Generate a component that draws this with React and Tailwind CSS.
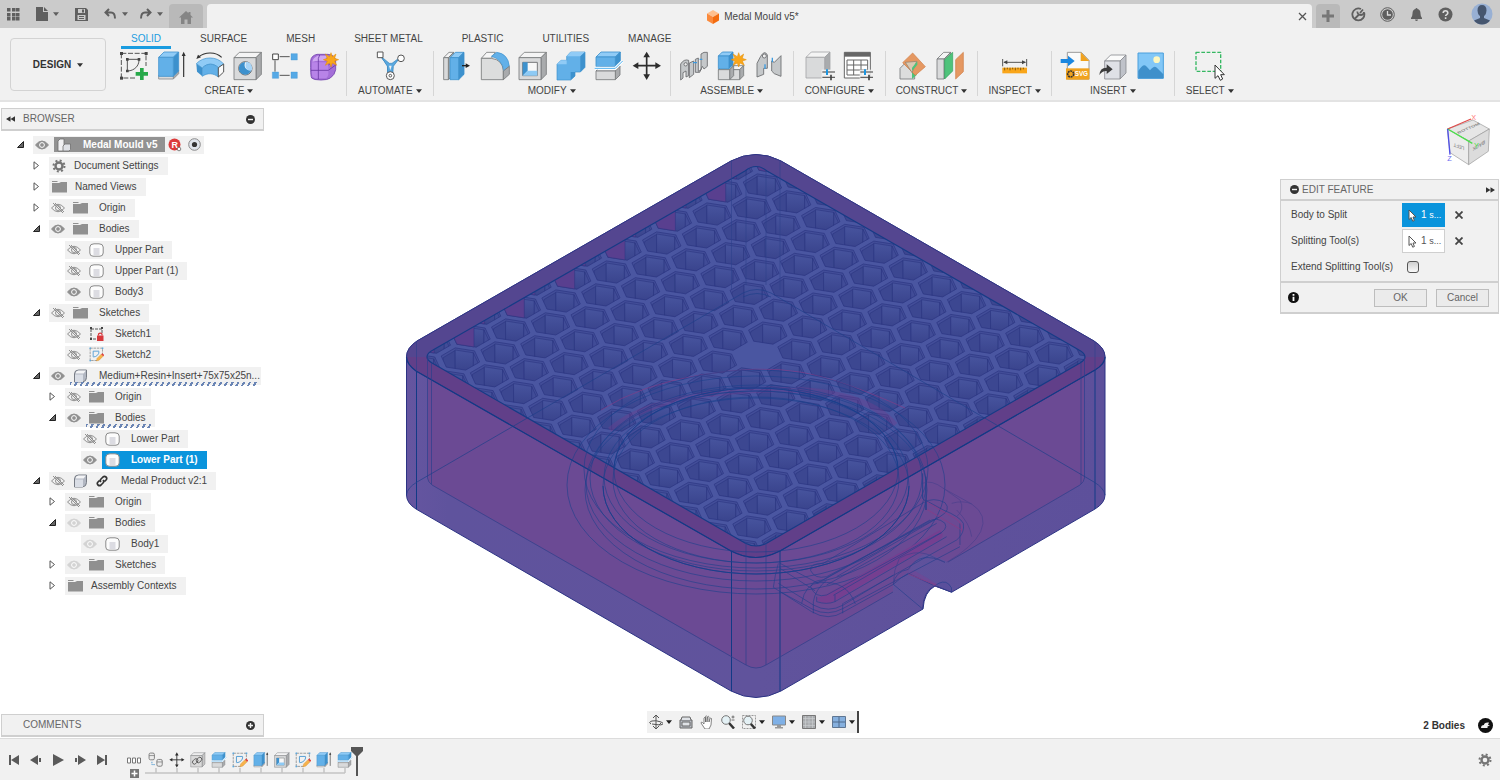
import React, { useState } from 'react';
import { clsx } from 'clsx';

const Caret = ({ className = 'text-[#333]' }) => (
  <svg viewBox="0 0 8 5" className={clsx('w-[6px] h-[4px] shrink-0', className)}>
    <path d="M0 0h8L4 5z" fill="currentColor" />
  </svg>
);

/* ---------- ribbon icons, all on a 90 x 90 grid ---------- */

const Ico = ({ size = 'size-[30px]', children }) => (
  <svg viewBox="0 0 90 90" className={clsx(size, 'shrink-0')} fill="none" strokeLinejoin="round">
    {children}
  </svg>
);

const BLUE = ['#62b0e8', '#90cbf6', '#3d91cd'];
const GREY = ['#d9dadb', '#f4f4f4', '#a9abad'];

const Box = ({ x, y, w, h, d, c = GREY, s = '#77797b' }) => (
  <g stroke={s} strokeWidth="2.5">
    <path d={`M${x} ${y + d}l${d} ${-d}h${w}l${-d} ${d}z`} fill={c[1]} />
    <path d={`M${x + w} ${y + d}l${d} ${-d}v${h}l${-d} ${d}z`} fill={c[2]} />
    <path d={`M${x} ${y + d}h${w}v${h}h${-w}z`} fill={c[0]} />
  </g>
);

const Star = ({ x, y }) => (
  <path
    transform={`translate(${x} ${y})`}
    d="M0-21l4 12 11-8-4 13 12 4-12 4 6 13-13-7-4 12-4-12-13 7 6-13-12-4 12-4-6-13 13 8z"
    fill="#f9a61a"
    stroke="#e28d00"
    strokeWidth="1.5"
  />
);

const Sketch = ({ size, pencil }) => (
  <Ico size={size}>
    <path d="M7 7h74v38M7 7v74h44" stroke="#555" strokeWidth="3" strokeDasharray="15 5" />
    {[[7, 7], [81, 7], [7, 81]].map(([x, y]) => (
      <rect key={x + '-' + y} x={x - 4} y={y - 4} width="9" height="9" fill={pencil ? '#5aa9e0' : '#444'} />
    ))}
    <path d="M25 25h35M25 25v34M60 27c0 18-14 32-34 33" stroke={pencil ? '#4595d0' : '#555'} strokeWidth={pencil ? 5 : 3} />
    {pencil ? (
      <>
        <path d="M44 84l5-17 24-24 12 12-24 24z" fill="#f7b34c" stroke="#c98220" strokeWidth="2" />
        <path d="M73 43l7-6 12 12-7 6z" fill="#e2403c" />
      </>
    ) : (
      <>
        <path d="M21 21h8v8h-8zM56 21h8v8h-8zM21 56h8v8h-8z" fill="#444" />
        <path d="M63 51h11v12h13v11H74v13H63V74H50V63h13z" fill="#27a94a" />
      </>
    )}
  </Ico>
);

const Extrude = ({ size }) => (
  <Ico size={size}>
    <Box x={5} y={58} w={44} h={10} d={16} s="#8a8c8e" />
    <Box x={5} y={3} w={44} h={57} d={16} c={BLUE} s="#4595d0" />
    <path d="M80 78V10" stroke="#333" strokeWidth="3.5" />
    <path d="M80 2l6 13H74z" fill="#333" />
  </Ico>
);

const Revolve = () => (
  <Ico>
    <path d="M12 17C30 2 62 2 80 19" stroke="#333" strokeWidth="3.5" />
    <path d="M4 24l5-13 9 8z" fill="#333" />
    <path d="M4 38C25 15 66 15 86 39L70 50C55 36 37 36 22 51z" fill={BLUE[1]} stroke="#3d91cd" strokeWidth="2" />
    <path d="M4 38l18 13v25L6 62z" fill={BLUE[2]} />
    <path d="M22 51c15-15 33-15 48-1v28c-15-12-33-13-48-2z" fill={BLUE[0]} stroke="#3d91cd" strokeWidth="2" />
    <path d="M70 50l16-11v24L70 78z" fill="#fafafa" stroke="#555" strokeWidth="3" />
  </Ico>
);

const Hole = () => (
  <Ico>
    <Box x={3} y={4} w={66} h={66} d={16} />
    <circle cx="37" cy="52" r="20" fill="#fff" stroke="#555" strokeWidth="2.5" />
    <path d="M37 33a19 19 0 1 0 18 24c-14 4-25-9-18-24z" fill={BLUE[2]} />
    <path d="M40 32c-8 16 2 30 17 26 2-16-5-25-17-26z" fill="#a8d5f7" />
  </Ico>
);

const Pattern = () => (
  <Ico>
    <path d="M26 17h30M12 28v34M26 73h30" stroke="#555" strokeWidth="3" />
    <rect x="5" y="9" width="17" height="17" fill="#fff" stroke="#444" strokeWidth="3" />
    {[[60, 8], [4, 63], [60, 63]].map(([x, y]) => (
      <rect key={x + '-' + y} x={x} y={y} width="19" height="19" fill="#55a9e6" stroke="#3d91cd" />
    ))}
  </Ico>
);

const Form = () => (
  <Ico>
    <path d="M5 30Q6 14 24 10h33q20 2 23 18v28q-2 15-16 25-8 6-28 6-22 0-28-6-4-6-3-51z" fill="#a46fd8" stroke="#7444ad" strokeWidth="2.5" />
    <path d="M10 32Q12 20 26 14h30l-10 16q-20-3-36 2z" fill="#cfa8f2" />
    <path d="M9 34h40q8 0 9 9v25q0 10-9 14H20q-11-2-11-12z" fill="#b884e8" />
    <path d="M32 12Q26 22 28 34v50M6 58h52l22-16M58 42l20-14" stroke="#6a3aa3" strokeWidth="2.5" />
    <Star x={66} y={26} />
  </Ico>
);

const Automate = () => (
  <Ico>
    <path d="M19 19l19 25v20h15V44l23-24" stroke="#3d86bd" strokeWidth="3" />
    <path d="M19 17l24 20h8l24-18-20 27-2 20H39l-2-20z" fill="#5aa9e0" stroke="#3d86bd" strokeWidth="2" />
    <path d="M42 44h8l-4 14z" fill="#f1f1f1" />
    <rect x="7" y="3" width="17" height="17" fill="#fff" stroke="#555" strokeWidth="3" />
    <circle cx="78" cy="22" r="10" fill="#fff" stroke="#555" strokeWidth="3" />
    <circle cx="46" cy="74" r="12" fill="#fff" stroke="#555" strokeWidth="3" />
    <circle cx="46" cy="74" r="4" fill="#fff" stroke="#555" strokeWidth="3" />
  </Ico>
);

const PressPull = () => (
  <Ico>
    <Box x={5} y={4} w={14} h={66} d={16} />
    <Box x={24} y={4} w={26} h={66} d={16} c={BLUE} s="#3d91cd" />
    <path d="M60 44h15" stroke="#222" strokeWidth="4" />
    <path d="M84 44l-13-7v14z" fill="#222" />
  </Ico>
);

const Fillet = () => (
  <Ico>
    <path d="M4 22L20 4h26L34 22z" fill="#f6f6f6" stroke="#77797b" strokeWidth="2.5" />
    <path d="M4 22h30q34 4 36 38v26H4z" fill="#dcdddd" stroke="#77797b" strokeWidth="2.5" />
    <path d="M34 16L50 4q34 4 38 42L72 60Q66 24 34 16z" fill={BLUE[0]} stroke="#3d91cd" strokeWidth="2" />
    <path d="M70 60l18-14v24L70 86z" fill="#a9abad" stroke="#77797b" strokeWidth="2.5" />
  </Ico>
);

const Shell = ({ size }) => (
  <Ico size={size}>
    <Box x={3} y={4} w={66} h={66} d={16} />
    <path d="M14 34h44v40H14z" fill="#f8f8f8" stroke="#77797b" strokeWidth="3" />
    <path d="M14 34h15v25L14 74z" fill={BLUE[2]} />
    <path d="M29 59h29v15H14z" fill="#8dcaf5" />
  </Ico>
);

const Combine = () => (
  <Ico>
    <path d="M3 40l12-12h17V16L44 3h43v46L73 63H57v12L44 87H3z" fill={BLUE[0]} stroke="#3d91cd" strokeWidth="2" />
    <path d="M3 40l12-12h17v12zM32 16L44 3h43L73 16z" fill={BLUE[1]} />
    <path d="M73 16L87 3v46L73 63zM57 63v12L44 87V63z" fill={BLUE[2]} />
  </Ico>
);

const Split = ({ size }) => (
  <Ico size={size}>
    <Box x={6} y={46} w={58} h={26} d={14} />
    <Box x={6} y={3} w={58} h={29} d={15} c={BLUE} s="#3d91cd" />
    <path d="M2 52h62l22-22" stroke="#fff" strokeWidth="9" />
    <path d="M2 52h62l22-22" stroke="#4fb0ef" strokeWidth="3" />
  </Ico>
);

const Move = ({ size }) => (
  <Ico size={size}>
    <path d="M44 12v64M12 44h64" stroke="#2d2d2d" strokeWidth="5" />
    <path d="M44 2l10 17H34zM44 87l10-17H34zM2 44l17-10v20zM87 44L70 34v20z" fill="#2d2d2d" />
  </Ico>
);

const Component = () => (
  <Ico>
    <g fill="#c5c8ca" stroke="#66686a" strokeWidth="2.5">
      <path d="M5 39q10-16 24-11v46l-8 4V60l-9 5v16l-7 6z" />
      <path d="M31 36l13-6v40l-13 10z" />
      <path d="M49 25l9-4v40l8-4V9l9-5 10 0v42l-10 8-5-8-8 18-13 0z" />
      <circle cx="20" cy="40" r="5" fill="#eee" />
    </g>
    <path d="M42 35h12M62 25h8" stroke="#3d9be0" strokeWidth="4" />
  </Ico>
);

const NewComponent = () => (
  <Ico>
    <Box x={38} y={44} w={30} h={30} d={12} />
    <Box x={4} y={44} w={34} h={30} d={12} />
    <Box x={4} y={3} w={32} h={38} d={12} c={BLUE} s="#3d91cd" />
    <Star x={65} y={26} />
  </Ico>
);

const Joint = () => (
  <Ico>
    <g fill="#c5c8ca" stroke="#66686a" strokeWidth="2.5">
      <path d="M6 37L17 16q12-20 20-4v40H26v18L6 78z" />
      <path d="M50 30l8 4 20-20v62L58 68l-8-8z" />
      <circle cx="28" cy="15" r="6" fill="#eee" />
    </g>
    <path d="M30 40v14M52 20v14" stroke="#3d9be0" strokeWidth="4" />
  </Ico>
);

const Sliders = () => (
  <g strokeWidth="3.5">
    <path d="M52 63h38" stroke="#555" />
    <path d="M66 55v17" stroke="#1b95e0" strokeWidth="6" />
    <path d="M52 79h38" stroke="#555" />
    <path d="M78 71v17" stroke="#444" strokeWidth="5" />
  </g>
);

const ConfigModel = () => (
  <Ico>
    <Box x={3} y={3} w={56} h={62} d={16} s="#a3a5a7" />
    <path d="M50 56h42v34H50z" fill="#f1f1f1" />
    <Sliders />
  </Ico>
);

const ConfigTable = () => (
  <Ico>
    <path d="M4 4h78v77H4z" fill="#fff" stroke="#666" strokeWidth="3" />
    <path d="M4 4h78v13H4z" fill="#666" />
    <path d="M12 27h62M12 42h62M12 57h62M12 72h40M12 27v45M32 27v45M54 27v45M74 27v30" stroke="#666" strokeWidth="3" />
    <path d="M50 56h42v34H50z" fill="#f1f1f1" fillOpacity=".85" />
    <Sliders />
  </Ico>
);

const OffsetPlane = () => (
  <Ico>
    <path d="M6 52l14-14h30v46H6z" fill="#dcdddd" stroke="#77797b" strokeWidth="2.5" />
    <path d="M42 60l14-14v26L42 84z" fill="#4fc37b" />
    <path d="M44 6l38 41-30 26-38-38z" fill="#e59862" stroke="#ce7b44" strokeWidth="2" />
    <path d="M22 34l34-3-14 34z" fill="#d9c9b3" stroke="#8b7a68" strokeWidth="2" />
    <path d="M42 50l16-19v10L42 60z" fill="#4fc37b" />
  </Ico>
);

const Midplane = () => (
  <Ico>
    <Box x={3} y={4} w={21} h={60} d={20} />
    <path d="M26 26L50 4v56L26 84z" fill="#4fc37b" stroke="#35a55f" strokeWidth="2" />
    <path d="M59 26L82 4v58L59 84z" fill="#e59862" stroke="#ce7b44" strokeWidth="2" />
  </Ico>
);

const Measure = () => (
  <Ico>
    <path d="M8 24v22M80 24v22M12 34h64" stroke="#555" strokeWidth="3" />
    <path d="M10 34l12-6v12zM78 34l-12-6v12z" fill="#444" />
    <path d="M7 50h74v17H7z" fill="#f9a61a" />
    <path d="M14 50v8M22 50v5M30 50v8M38 50v5M46 50v8M54 50v5M62 50v8M70 50v5" stroke="#6b4a10" strokeWidth="2.5" />
  </Ico>
);

const InsertSvg = () => (
  <Ico>
    <path d="M22 4h42l23 24v56H22z" fill="#fafafa" stroke="#9a9a9a" strokeWidth="3" />
    <path d="M62 3l26 27H62z" fill="#f0a21f" />
    <path d="M18 52h70v34H18z" fill="#f0a21f" />
    <path d="M2 24h22V14l20 16-20 16V36H2z" fill="#1b87e0" />
    <circle cx="32" cy="69" r="9" stroke="#333" strokeWidth="5" strokeDasharray="6 2" />
    <text x="44" y="76" fill="#fff" fontSize="19" fontWeight="bold">SVG</text>
  </Ico>
);

const Derive = () => (
  <Ico>
    <Box x={20} y={12} w={46} h={54} d={18} c={['#dfe1e6', '#fbfbfb', '#bfc2c9']} s="#8a8c90" />
    <path d="M4 72q2-23 22-22V40l18 15-18 14V60q-13-1-22 12z" fill="#3c3c3c" />
  </Ico>
);

const Canvas = () => (
  <Ico>
    <path d="M6 6h76v76H6z" fill="#82c7f7" stroke="#4a9fdc" strokeWidth="3" />
    <path d="M7 60q16-26 26-12l9 10q14-18 22-6l18 18v12H7z" fill="#3f90cb" />
    <circle cx="62" cy="26" r="10" fill="#fdf7c0" />
  </Ico>
);

const Select = () => (
  <Ico>
    <rect x="3" y="4" width="74" height="57" stroke="#35b862" strokeWidth="4" strokeDasharray="11 5" />
    <path d="M60 42v40l9-8 7 14 7-4-6-13h11z" fill="#fff" stroke="#333" strokeWidth="3" />
  </Ico>
);

const GROUPS = [
  { name: 'CREATE', pad: 'pl-[3px] pr-[7px]', icons: [Sketch, Extrude, Revolve, Hole, Pattern, Form] },
  { name: 'AUTOMATE', pad: 'px-[11px]', icons: [Automate] },
  { name: 'MODIFY', pad: 'px-2', icons: [PressPull, Fillet, Shell, Combine, Split, Move] },
  { name: 'ASSEMBLE', pad: 'px-2', icons: [Component, NewComponent, Joint] },
  { name: 'CONFIGURE', pad: 'px-[11px]', icons: [ConfigModel, ConfigTable] },
  { name: 'CONSTRUCT', pad: 'px-[10px]', icons: [OffsetPlane, Midplane] },
  { name: 'INSPECT', pad: 'px-[10px]', icons: [Measure] },
  { name: 'INSERT', pad: 'px-2', icons: [InsertSvg, Derive, Canvas] },
  { name: 'SELECT', pad: 'px-[11px]', icons: [Select] },
];

const TABS = ['SOLID', 'SURFACE', 'MESH', 'SHEET METAL', 'PLASTIC', 'UTILITIES', 'MANAGE'];

/* ---------- top bar ---------- */

const TopBar = () => (
  <header className="flex items-end h-7 bg-[#cbcbcb] text-[#5f5f5f]">
    <div className="flex items-center h-7 w-[169px] shrink-0 pl-[7px]">
      <button aria-label="Data panel" className="mr-4">
        <svg viewBox="0 0 13 13" className="size-[13px]" fill="currentColor">
          {[0, 5, 9].map((x) => [0, 5, 9].map((y) => <rect key={x + '-' + y} x={x} y={y} width="3.5" height="3.5" />))}
        </svg>
      </button>
      <button aria-label="File" className="flex items-center gap-[5px] mr-4">
        <svg viewBox="0 0 12 14" className="w-3 h-[14px]" fill="currentColor">
          <path d="M0 0h7v5h5v9H0zM8 0l4 4H8z" />
        </svg>
        <Caret className="text-[#5f5f5f]" />
      </button>
      <button aria-label="Save" className="mr-4">
        <svg viewBox="0 0 13 13" className="size-[13px]" fill="currentColor" fillRule="evenodd">
          <path d="M0 0h11l2 2v11H0zM3 1v4h7V1zM2.500 7v5h8V7zM7 1.500h2v3H7zM4 8h5v1H4zM4 10h5v1H4z" />
        </svg>
      </button>
      <button aria-label="Undo" className="flex items-center gap-[5px] mr-[11px]">
        <svg viewBox="0 0 13 12" className="w-[13px] h-3" fill="none" stroke="currentColor" strokeWidth="2">
          <path d="M5 1L1.500 4.500 5 8M2 4.500h5q4 0 4 6" />
        </svg>
        <Caret className="text-[#5f5f5f]" />
      </button>
      <button aria-label="Redo" className="flex items-center gap-[5px]">
        <svg viewBox="0 0 13 12" className="w-[13px] h-3" fill="none" stroke="currentColor" strokeWidth="2">
          <path d="M8 1l3.500 3.500L8 8M11 4.500H6q-4 0-4 6" />
        </svg>
        <Caret className="text-[#5f5f5f]" />
      </button>
    </div>
    <button aria-label="Home" className="flex items-end justify-center pb-[4px] w-[34px] h-6 rounded-t bg-[#b9b9b9] text-[#858585]">
      <svg viewBox="0 0 14 13" className="w-[14px] h-[13px]" fill="currentColor">
        <path d="M7 0l2.500 2.300V1h2v3L14 6.500h-2V13H8.500V8.500h-3V13H2V6.500H0z" />
      </svg>
    </button>
    <div className="flex items-center flex-1 h-6 ml-1 rounded-t bg-[#f1f1f1]">
      <div className="flex items-center justify-center gap-1 flex-1 pt-[2px] text-[10px] text-[#444]">
        <svg viewBox="0 0 14 14" className="size-[14px]">
          <path d="M7 0l6 3.500L7 7 1 3.500z" fill="#ffc08e" />
          <path d="M1 3.500L7 7v7l-6-3.500z" fill="#fb8a3c" />
          <path d="M13 3.500L7 7v7l6-3.500z" fill="#f36c10" />
        </svg>
        <span>Medal Mould v5*</span>
      </div>
      <button aria-label="Close document" className="mr-[5px]">
        <svg viewBox="0 0 9 9" className="size-[9px]" stroke="#555" strokeWidth="1.300">
          <path d="M1 1l7 7M8 1L1 8" />
        </svg>
      </button>
    </div>
    <button aria-label="New document" className="flex items-center justify-center w-6 h-6 ml-1 rounded-t bg-[#b9b9b9]">
      <svg viewBox="0 0 12 12" className="size-3" stroke="#777" strokeWidth="3">
        <path d="M6 0v12M0 6h12" />
      </svg>
    </button>
    <div className="flex items-center h-7 gap-[14px] pl-[11px] pr-[7px]">
      <button aria-label="Extensions">
        <svg viewBox="0 0 15 15" className="size-[15px]" fill="none" stroke="currentColor" strokeWidth="1.800">
          <path d="M10 2A6 6 0 1 0 13.200 6" />
          <path d="M4 11.500l3.500-3.500M6.500 4.500q-.5 3 3.500 3.500 3-.5 3-3M9 6l3-3.500" />
        </svg>
      </button>
      <button aria-label="Job status">
        <svg viewBox="0 0 15 15" className="size-[15px]">
          <circle cx="7.500" cy="7.500" r="6.800" fill="none" stroke="currentColor" />
          <circle cx="7.500" cy="7.500" r="5.300" fill="currentColor" />
          <path d="M7.500 4v4h3.500" fill="none" stroke="#ddd" strokeWidth="1.300" />
        </svg>
      </button>
      <button aria-label="Notifications">
        <svg viewBox="0 0 15 15" className="size-[15px]" fill="currentColor">
          <path d="M7.500 1q1 0 1 1 3 .8 3 4.500 0 3 1.500 4.500v1H2v-1q1.500-1.500 1.500-4.500 0-3.700 3-4.500 0-1 1-1zM6 12.500h3q-.3 1.500-1.500 1.500T6 12.500z" />
        </svg>
      </button>
      <button aria-label="Help">
        <svg viewBox="0 0 15 15" className="size-[15px]">
          <circle cx="7.500" cy="7.500" r="7" fill="currentColor" />
          <path d="M5.200 6q0-2.300 2.300-2.300T9.800 6q0 1-1.100 1.700T7.600 9M7.600 10.300v1.700" fill="none" stroke="#ddd" strokeWidth="1.600" />
        </svg>
      </button>
      <button aria-label="Account" className="ml-1">
        <svg viewBox="0 0 22 22" className="size-[22px]">
          <circle cx="11" cy="11" r="10.500" fill="#98b0d4" />
          <path d="M11 2q4.500 0 4.500 5.500Q15 12 13 13v2l6 2.500q-3 4-8 4t-8-4L9 15v-2Q7 12 6.500 7.500 6.500 2 11 2z" fill="#46566f" />
        </svg>
      </button>
    </div>
  </header>
);

const Ribbon = () => {
  const [tab, setTab] = useState('SOLID');
  return (
    <nav className="flex bg-[#f1f1f1] border-b-2 border-[#e3e3e3] text-[10px] text-[#444]">
      <button className="flex items-center justify-center gap-[6px] w-24 h-[53px] mt-[10px] mb-[9px] ml-[10px] shrink-0 rounded border border-[#d3d3d3] font-bold text-[#333]">
        DESIGN <Caret />
      </button>
      <div className="flex flex-col ml-[10px]">
        <div className="flex gap-[19px] pl-[5px]">
          {TABS.map((t) => (
            <button
              key={t}
              onClick={() => setTab(t)}
              className={clsx(
                'px-[10px] pt-[3px] h-[21px] leading-[14px] border-b-[3px]',
                t === tab ? 'border-[#1a9ce0] text-[#1a9ce0]' : 'border-transparent'
              )}
            >
              {t}
            </button>
          ))}
        </div>
        <div className="flex pt-[2px]">
          {GROUPS.map(({ name, pad, icons }) => (
            <div key={name} className={clsx('flex flex-col items-center h-[45px] border-r border-[#d6d6d6] last:border-0', pad)}>
              <div className="flex gap-2">
                {icons.map((Icon, i) => (
                  <button key={i} aria-label={name.toLowerCase() + ' ' + (i + 1)}>
                    <Icon />
                  </button>
                ))}
              </div>
              <button className="flex items-center gap-[3px] mt-1 leading-3">
                {name} <Caret />
              </button>
            </div>
          ))}
        </div>
      </div>
    </nav>
  );
};

/* ---------- browser tree ---------- */

const Eye = ({ state }) => (
  <svg
    viewBox="0 0 14 10"
    className={clsx('w-[14px] h-[10px] shrink-0', state === 'dim' ? 'text-[#d3d3d3]' : 'text-[#909090]')}
    fill="none"
    stroke="currentColor"
  >
    {state === 'off' ? (
      <>
        <path d="M.5 5Q7-2.500 13.500 5 7 12.500.5 5z" />
        <circle cx="7" cy="5" r="2.500" />
        <path d="M2 0l10 10M4 0l9 9" />
      </>
    ) : (
      <>
        <path d="M.5 5Q7-3 13.500 5 7 13 .5 5z" fill="currentColor" />
        <circle cx="7" cy="5" r="2.400" fill="currentColor" stroke="#fff" />
      </>
    )}
  </svg>
);

const TreeIcon = ({ kind }) => {
  switch (kind) {
    case 'folder':
      return (
        <svg viewBox="0 0 15 13" className="w-[15px] h-[13px] shrink-0" fill="#909090">
          <path d="M0 1h5.500v1H0zM0 3h7l2-1h6v10.500H0z" />
        </svg>
      );
    case 'gear':
      return (
        <svg viewBox="0 0 14 14" className="size-[14px] shrink-0" fill="none" stroke="#757575">
          <circle cx="7" cy="7" r="3.500" strokeWidth="2.400" />
          <circle cx="7" cy="7" r="5.500" strokeWidth="2" strokeDasharray="2 2.320" />
        </svg>
      );
    case 'body':
      return (
        <svg viewBox="0 0 15 14" className="w-[15px] h-[14px] shrink-0">
          <path d="M.8 4Q1 .8 5 .8h5q4 0 4.200 3.200v6q-.2 3.200-3.200 3.200H4Q.8 13.200.8 10z" fill="#fcfcfc" stroke="#8a8a8a" />
          <path d="M4.500 5h6v7.300h-6z" fill="#dcdce2" />
        </svg>
      );
    case 'component':
      return (
        <svg viewBox="0 0 15 14" className="w-[15px] h-[14px] shrink-0">
          <path d="M1.500 5q0-4 4-4h8v7.500q0 4-4 4.500h-8z" fill="#b2b7c2" stroke="#777c85" />
          <path d="M2 5.500h8V13H2z" fill="#dadee6" />
          <path d="M2.500 4.500q.5-3 3.500-3h7l-2.500 3z" fill="#f3f4f6" />
        </svg>
      );
    case 'assembly':
      return (
        <svg viewBox="0 0 15 14" className="w-[15px] h-[14px] shrink-0" stroke="#6f6f6f" strokeWidth=".8">
          <path d="M1 3l2-2h4v11L5.500 13H1z" fill="#f0f0f2" />
          <path d="M6 8l2-2h5.500v5.500L12 13H6z" fill="#dfe1e6" />
        </svg>
      );
    case 'locked':
      return (
        <svg viewBox="0 0 15 14" className="w-[15px] h-[14px] shrink-0" fill="none">
          <path d="M2 2h11v4M2 2v10h5" stroke="#555" strokeDasharray="3 1" />
          <path d="M1 0h2v2H1zM12 0h2v2h-2zM1 11h2v2H1z" fill="#444" />
          <path d="M8 8.500h6.500V14H8z" fill="#d8383c" />
          <path d="M9.500 8.500V7q1.800-1.800 3.500 0v1.500" stroke="#d8383c" strokeWidth="1.200" />
        </svg>
      );
    default:
      return <Sketch size="size-[15px]" pencil />;
  }
};

const ROWS = [
  { lvl: 1, open: false, icon: 'gear', label: 'Document Settings' },
  { lvl: 1, open: false, icon: 'folder', label: 'Named Views' },
  { lvl: 1, open: false, eye: 'off', icon: 'folder', label: 'Origin' },
  { lvl: 1, open: true, eye: 'on', icon: 'folder', label: 'Bodies' },
  { lvl: 2, eye: 'off', icon: 'body', label: 'Upper Part' },
  { lvl: 2, eye: 'off', icon: 'body', label: 'Upper Part (1)' },
  { lvl: 2, eye: 'on', icon: 'body', label: 'Body3' },
  { lvl: 1, open: true, eye: 'off', icon: 'folder', label: 'Sketches' },
  { lvl: 2, eye: 'off', icon: 'locked', label: 'Sketch1' },
  { lvl: 2, eye: 'off', icon: 'sketch', label: 'Sketch2' },
  { lvl: 1, open: true, eye: 'on', icon: 'component', label: 'Medium+Resin+Insert+75x75x25n...', hatch: true, long: true },
  { lvl: 2, open: false, eye: 'off', icon: 'folder', label: 'Origin' },
  { lvl: 2, open: true, eye: 'on', icon: 'folder', label: 'Bodies', hatch: true },
  { lvl: 3, eye: 'off', icon: 'body', label: 'Lower Part' },
  { lvl: 3, eye: 'on', icon: 'body', label: 'Lower Part (1)', active: true },
  { lvl: 1, open: true, eye: 'off', icon: 'component', label: 'Medal Product v2:1', link: true },
  { lvl: 2, open: false, eye: 'off', icon: 'folder', label: 'Origin' },
  { lvl: 2, open: true, eye: 'dim', icon: 'folder', label: 'Bodies' },
  { lvl: 3, eye: 'dim', icon: 'body', label: 'Body1' },
  { lvl: 2, open: false, eye: 'dim', icon: 'folder', label: 'Sketches' },
  { lvl: 2, open: false, icon: 'folder', label: 'Assembly Contexts' },
];

const INDENT = { 0: 'pl-4', 1: 'pl-8', 2: 'pl-12', 3: 'pl-16' };

const Toggle = ({ open }) => (
  <span className="w-[17px] shrink-0">
    {open !== undefined && (
      <svg viewBox="0 0 9 9" className="size-[9px]">
        {open ? (
          <path d="M7.500 1.500v6h-6z" fill="#666" stroke="#222" />
        ) : (
          <path d="M2 .8l4.500 3.700L2 8.200z" fill="#fff" stroke="#555" />
        )}
      </svg>
    )}
  </span>
);

const TreeRow = ({ lvl, open, eye, icon, label, hatch, long, active, link }) => (
  <li className={clsx('flex items-center h-[21px]', INDENT[lvl])}>
    <Toggle open={open} />
    <div className="flex items-center h-[18px] bg-[#f1f1f1]">
      {eye && (
        <span className="w-[21px] pl-[2px]">
          <Eye state={eye} />
        </span>
      )}
      <div
        className={clsx(
          'relative flex items-center h-full pl-[3px] whitespace-nowrap',
          long ? 'pr-px' : 'pr-[9px]',
          active && 'bg-[#0a94dc] text-white font-bold'
        )}
      >
        <TreeIcon kind={icon} />
        {link && (
          <svg viewBox="0 0 12 12" className="size-3 ml-2 mr-[2px] shrink-0" fill="none" stroke="#333" strokeWidth="1.700">
            <path d="M5 7Q3.500 5.500 5 4l2-2q1.500-1.300 3 0t0 3L8.500 6.500M7 5q1.500 1.500 0 3l-2 2q-1.500 1.300-3 0t0-3l1.500-1.500" />
          </svg>
        )}
        <span className={eye ? 'ml-[11px]' : 'ml-2'}>{label}</span>
        {hatch && (
          <span className="absolute left-0 right-1 -bottom-px h-1 bg-[repeating-linear-gradient(120deg,#6a85b5_0_2px,transparent_2px_5px)]" />
        )}
      </div>
    </div>
  </li>
);

const PanelBar = ({ title, left, sign }) => (
  <div className="flex items-center h-[23px] ml-px mr-px bg-[#f1f1f1] border border-b-2 border-[#cfcfcf] text-[#666]">
    <span className="w-[21px] pl-1">
      {left && (
        <svg viewBox="0 0 10 6" className="w-[9px] h-[6px]" fill="#333">
          <path d="M5 0v6L0 3zM10 0v6L5 3z" />
        </svg>
      )}
    </span>
    <h2 className="flex-1">{title}</h2>
    <button aria-label={'Toggle ' + title.toLowerCase()} className="mr-2">
      <svg viewBox="0 0 9 9" className="size-[9px]" stroke="#f1f1f1" strokeWidth="1.400">
        <circle cx="4.500" cy="4.500" r="4.500" fill="#333" stroke="none" />
        <path d={sign === '+' ? 'M2 4.500h5M4.500 2v5' : 'M2 4.500h5'} />
      </svg>
    </button>
  </div>
);

const Sidebar = () => (
  <aside className="flex flex-col w-[265px] shrink-0 pt-[6px] pb-[1px]">
    <PanelBar title="BROWSER" left sign="-" />
    <ul className="mt-[3px]">
      <li className="flex items-center h-[21px] pl-4">
        <Toggle open />
        <div className="flex items-center h-[18px] pr-px bg-[#f1f1f1]">
          <span className="w-[21px] pl-[2px]">
            <Eye state="on" />
          </span>
          <span className="flex items-center h-[15px] pl-[3px] pr-2 bg-[#929292] text-white font-bold">
            <TreeIcon kind="assembly" />
            <span className="ml-[11px]">Medal Mould v5</span>
          </span>
          <svg viewBox="0 0 14 14" className="size-[14px] ml-[3px]">
            <circle cx="6.500" cy="6.500" r="6" fill="#dc3b3b" />
            <text x="3.500" y="10" fontSize="9" fontWeight="bold" fill="#fff">R</text>
            <circle cx="11" cy="11" r="1.800" fill="#fff" stroke="#555" strokeWidth=".7" />
          </svg>
          <svg viewBox="0 0 13 13" className="size-[13px] ml-[6px] mr-[2px]">
            <circle cx="6.500" cy="6.500" r="5.800" fill="#dfe4ec" stroke="#8a8a8a" />
            <circle cx="6.500" cy="6.500" r="2.600" fill="#333" />
          </svg>
        </div>
      </li>
      {ROWS.map((row, i) => (
        <TreeRow key={i} {...row} />
      ))}
    </ul>
    <div className="mt-auto">
      <PanelBar title="COMMENTS" sign="+" />
    </div>
  </aside>
);

/* ---------- 3D model ---------- */

// honeycomb cell centres: half steps along both lattice directions
const CELLS = [];
for (let i = -3; i <= 15; i++) {
  for (let j = -24; j <= 3; j++) {
    if ((i + j) % 2 !== 0) continue;
    if (i === 6 && j === -10) continue;
    CELLS.push({
      x: 752 + i * 25.17 + j * 14.58,
      y: 527 - i * 14.5 + j * 8.4,
      edge: j < -20,
    });
  }
}

const CELL = 'M19.200 3L14.100-8.100L-5.200-11.100L-19.200-3L-14.100 8.100L5.200 11.100Z';

const OUTER =
  'M406.500 357Q406.500 348 417 341L731 161Q756 148 781 161L1094 341Q1105 348 1105 357V495Q1105 503 1095 509L952 592L935 586Q924 592 923 609L781 691Q756 704 731 691L416 509Q406.500 503 406.500 495Z';
const TOP =
  'M406.500 357Q406.500 348 417 341L731 161Q756 148 781 161L1094 341Q1105 348 1105 357Q1105 364 1095 370L780 551Q756 564 731 551L416 371Q406.500 364 406.500 357Z';
const POCKET =
  'M427 357Q427 353 433 350L745 171Q756 162 767 171L1079 350Q1085 353 1085 357Q1085 360 1080 363L767 543Q756 549 745 543L432 363Q427 360 427 357Z';

const RINGS = [
  [756, 485, 189, 109],
  [756, 469, 172, 99],
  [756, 490, 171, 99],
  [756, 484, 170, 97],
  [756, 478, 166, 93],
  [756, 486, 153, 88],
  [756, 477, 152, 86],
  [756, 470, 142, 82],
  [756, 480, 143, 83],
];

const Model = () => (
  <svg viewBox="265 102 1015 604" className="flex-1 min-h-0 w-full" fill="none" strokeLinejoin="round">
    <defs>
      <clipPath id="pocket">
        <path d={POCKET} />
      </clipPath>
      <clipPath id="cell">
        <path d={CELL} />
      </clipPath>
      <linearGradient id="wall" x1="0" y1="0" x2="0" y2="1">
        <stop offset="0" stopColor="#47549e" />
        <stop offset="1" stopColor="#38428b" />
      </linearGradient>
      <linearGradient id="side" x1="0" y1="0" x2="1" y2="0">
        <stop offset="0" stopColor="#6555a0" />
        <stop offset="0.060" stopColor="#5f539d" />
        <stop offset="0.500" stopColor="#60539c" />
        <stop offset="1" stopColor="#5d509b" />
      </linearGradient>
      <g id="hex">
        <path d={CELL} fill="#434e99" />
        <g clipPath="url(#cell)" stroke="#2b3581" strokeWidth=".6">
          <path d="M-17-1.500L-5.200-8.500V14H-20Z" fill="#3c4791" />
          <path d="M-5.200-9L13-6.200V14H-5.200Z" fill="url(#wall)" />
          <path d="M13-6.200L17.500 3.500V14H13Z" fill="#414c97" />
        </g>
        <path d={CELL} stroke="#2c3683" strokeWidth=".7" />
      </g>
    </defs>

    <path d={OUTER} fill="url(#side)" stroke="#2c3384" />
    <path
      d="M428 358L756 547L1084 358V478Q1084 482 1080 485L948 562L932 555Q920 550 908 572L893 584V592L766 665Q756 671 746 665L432 485Q428 482 428 478Z"
      fill="#6b4a94"
    />
    <path d={TOP} fill="#544690" />
    <path d="M406.500 357H427L756 545L1085 357H1105Q1105 364 1095 370L780 551Q756 564 731 551L416 371Q406.500 364 406.500 357Z" fill="#613f89" />
    <path d={POCKET} fill="#4a56a1" />

    <g clipPath="url(#pocket)">
      {CELLS.map((c, i) => (
        <g key={i} transform={`translate(${c.x} ${c.y})`}>
          <use href="#hex" />
          {c.edge && <path d="M-19.200-3L-5.200-11.100L3-9.800V10.800L-14.100 8.100Z" fill="#593f8f" stroke="#2f3583" strokeWidth=".6" />}
        </g>
      ))}
    </g>

    <path d={POCKET} stroke="#173b86" strokeWidth="1.200" />
    <path d={TOP} stroke="#2c3384" strokeWidth=".8" />
    <path d="M406.500 357Q406.500 364 416 371L731 551Q756 564 780 551L1095 370Q1105 364 1105 357" stroke="#123a86" strokeWidth="1.200" />

    {/* vertical and hidden edges */}
    <path d="M416.500 371V509M1095 370V509M731.500 551V691M780 551V691" stroke="#123a86" />
    <path d="M416.500 342V371M1095 342V370M731.500 161V290M780 161V290M746 171V285M766 171V285" stroke="#2b3f8c" strokeWidth=".6" />
    <path d="M431.500 363V484M427.500 358V478M1081 363V484M1084.500 358V478M746 543V665M766 543V665" stroke="#2b3f8c" strokeWidth=".7" />
    <path d="M427.500 478Q428 482 432 485L746 665Q756 671 766 665L893 592M948 562L1080 485Q1084 482 1084.500 478" stroke="#34408c" strokeWidth=".8" />
    <path d="M406.500 495Q407 488 417 482L743 293Q757 286 771 293L1094 482Q1104 488 1105 495M743 297Q757 290 771 297" stroke="#1f3f8a" strokeWidth=".7" />

    {/* round cavity */}
    <g stroke="#1b3f8c" strokeWidth=".6">
      <path d="M601 410Q640 385 700 375T800 372T905 408" stroke="#8a3a86" />
      <path d="M610 430Q650 395 756 390T895 425" stroke="#6d3f8e" strokeWidth="6" opacity=".4" />
      {RINGS.map(([cx, cy, rx, ry], i) => (
        <ellipse key={i} cx={cx} cy={cy} rx={rx} ry={ry} />
      ))}
      <path d="M614 470A142 82 0 0 1 898 470M603 486A153 88 0 0 0 909 486" strokeWidth="1" />
    </g>

    {/* pour channel and sprue, drawn at three times its size */}
    <g transform="translate(560 350) scale(.33333)" stroke="#26408c" strokeWidth="2">
      <path d="M790 738L1140 540Q1160 560 1130 575L815 758Q780 765 770 745Z" fill="#753f90" stroke="none" />
      <path d="M1040 668L1060 660L1175 727L1120 708Z" fill="#6b4a97" stroke="none" />
      <path d="M1125 707Q1150 688 1166 702Q1178 712 1175 727Z" fill="#5a4f9c" />
      <path d="M1088 777Q1090 722 1125 707L1175 727" stroke="#2c3384" />
      <path d="M655 640Q645 675 640 712L755 785Q805 815 852 785L1000 703" />
      <path d="M660 640L775 700M660 655L765 722M655 700L760 765Q805 790 850 765L1000 675M660 725L758 778Q805 800 850 775" />
      <path d="M752 662Q748 640 790 640L1090 458Q1120 440 1155 458Q1175 480 1140 500L800 680Q765 688 752 662Z" />
      <path d="M752 710Q760 690 790 690L1105 515Q1130 498 1155 520Q1165 540 1130 555L800 735Q765 745 752 710Z" />
      <path d="M770 700L1110 510M800 705L1130 520M830 680L1140 500M820 736L1145 548M825 755L1160 560M770 740V755Q800 765 825 755L825 735" />
      <path d="M850 760L1190 570Q1215 550 1210 520Q1200 500 1150 480L1095 450M850 775L1200 590M1200 520V585" />
      <path d="M1087 400Q1115 388 1150 415L1235 462Q1285 495 1262 545Q1240 590 1160 637" stroke="#4a3f8c" />
      <path d="M1150 415L1200 450Q1215 480 1190 500M1175 460Q1210 450 1235 462M1190 480Q1230 520 1235 560" stroke="#4a3f8c" />
      <path d="M1095 475L1205 540M1090 450L1185 505Q1210 520 1205 545" stroke="#8d3a83" />
      <path d="M725 760Q735 700 780 698Q860 690 886 762M760 790V755Q765 720 800 690M848 790V760" />
      <path d="M1088 370V445M1098 380V480M1088 445L1098 455V480" strokeWidth="3" />
      <path d="M1000 703Q1005 665 1045 658Q1080 600 1155 637M1000 703L1088 777M1000 703Q1025 680 1045 670L1120 706" />
      <path d="M1018 625Q1060 600 1100 612L1155 637M1018 625Q1000 660 1000 700" stroke="#3f3f8c" />
      <path d="M1045 672L1130 706" stroke="#7d3f8a" strokeWidth="3" />
    </g>
  </svg>
);

/* ---------- view tools under the model ---------- */

const VIEW_TOOLS = [
  { name: 'Orbit', caret: true, art: <path d="M7 0v14M4 3l3-3 3 3M4 11l3 3 3-3M2 9Q-1 7 3 6t9 1-1 3l-8-1M12 8l-2 2" stroke="#555" fill="none" /> },
  {
    name: 'Look at',
    art: (
      <>
        <path d="M1 5h12v8H1z" fill="#b9bdc4" stroke="#666" />
        <path d="M2 5l1-3h8l1 3M3 7h8v4H3z" fill="#dfe2e6" stroke="#666" />
      </>
    ),
  },
  { name: 'Pan', art: <path d="M5 14L1 8q0-1.500 1.500-.5L4 9V3q1-1.500 1.500 0V7 1.500Q6.500 0 7 1.500V7l.5-5q1-1.500 1.500 0V7l1-3.500q1-1 1.500 0L11 10l-2 4z" fill="#fff" stroke="#666" strokeWidth=".8" /> },
  {
    name: 'Zoom',
    art: (
      <>
        <path d="M8 8l5 5.500" stroke="#333" strokeWidth="2.500" />
        <circle cx="5" cy="5" r="4.300" fill="#e4f1f5" stroke="#777" />
        <path d="M10.500 2h3M12 .5v3M10.500 5h3" stroke="#555" strokeWidth=".8" />
      </>
    ),
  },
  {
    name: 'Fit',
    caret: true,
    art: (
      <>
        <path d="M.5.5h13v13H.5z" fill="none" stroke="#999" strokeDasharray="2 1" />
        <path d="M8 8l5 5.500" stroke="#333" strokeWidth="2.500" />
        <circle cx="6" cy="5.500" r="4.300" fill="#e4f1f5" stroke="#777" />
      </>
    ),
  },
  {
    name: 'Display settings',
    caret: true,
    art: (
      <>
        <path d="M.5 1h13v9H.5z" fill="#7fb0e6" stroke="#888" />
        <path d="M5 10h4v2h2v1.500H3V12h2z" fill="#999" />
      </>
    ),
  },
  {
    name: 'Grid and snaps',
    caret: true,
    art: (
      <>
        <path d="M.5.5h13v13H.5z" fill="#a9abae" stroke="#777" />
        <path d="M3.500 1v12M7 1v12M10.500 1v12M1 3.500h12M1 7h12M1 10.500h12" stroke="#cfd1d4" strokeWidth=".6" />
      </>
    ),
  },
  {
    name: 'Viewports',
    caret: true,
    art: (
      <>
        <path d="M.5 1.500h13v11H.5z" fill="#86b0de" stroke="#5f7692" />
        <path d="M7 2v10M1 7h12" stroke="#4f6a8c" />
      </>
    ),
  },
];

const ViewTools = () => (
  <div className="flex items-center self-center gap-[7px] h-[22px] mt-[5px] mb-[5px] mr-10 pl-[2px] pr-[2px] bg-[#f1f1f1] border-r-2 border-[#444]">
    {VIEW_TOOLS.map(({ name, caret, art }) => (
      <button key={name} aria-label={name} className="flex items-center gap-[3px]">
        <svg viewBox="0 0 14 14" className="size-[14px]">{art}</svg>
        {caret && <Caret className="text-[#222]" />}
      </button>
    ))}
  </div>
);

/* ---------- right column ---------- */

const ViewCube = () => (
  <svg viewBox="0 0 135 165" className="w-[45px] h-[55px] mr-[10px] self-end">
    <path d="M7 51L84 24L133 51L71 87z" fill="#e6e6e6" stroke="#999" strokeWidth="2" />
    <path d="M7 51L71 87V158L15 122z" fill="#ececec" stroke="#999" strokeWidth="2" />
    <path d="M71 87L133 51L130 118L71 158z" fill="#dcdcdc" stroke="#999" strokeWidth="2" />
    <text transform="matrix(.9 -.4 .4 .5 40 66)" fontSize="17" fill="#8b8b8b" fontWeight="bold">BOTTOM</text>
    <text transform="matrix(-.8 -.3 0 -1 58 104)" fontSize="16" fill="#999" fontWeight="bold">LEFT</text>
    <text transform="matrix(-.8 .5 0 -1 120 84)" fontSize="16" fill="#8f8f8f" fontWeight="bold">BACK</text>
    <path d="M8 51L78 21" stroke="#e04b4b" strokeWidth="4" />
    <path d="M8 51L82 94" stroke="#4be04b" strokeWidth="4" />
    <path d="M8 51L15 128" stroke="#4f4fe6" strokeWidth="4" />
    <text x="79" y="24" fontSize="22" fill="#ff7a7a">X</text>
    <text x="87" y="108" fontSize="22" fill="#4be04b">Y</text>
    <text x="7" y="147" fontSize="22" fill="#6b6bf0">Z</text>
  </svg>
);

const SelectionField = ({ id, label, active }) => (
  <div className="flex items-center h-[26px]">
    <label htmlFor={id} className="w-[111px]">{label}</label>
    <button
      id={id}
      className={clsx(
        'flex items-center gap-1 w-[43px] h-6 pl-[5px] border',
        active ? 'bg-[#0a94dc] border-[#0a94dc] text-white' : 'bg-white border-[#cfcfcf] text-[#555]'
      )}
    >
      <svg viewBox="0 0 9 13" className="w-[9px] h-[13px]">
        <path d="M1 1v9.500l2.200-2 1.500 3.700 1.700-.7L5 8h3z" fill="#fff" stroke="#555" />
      </svg>
      <span>1 <span className="text-[9px]">s...</span></span>
    </button>
    <button aria-label={'Clear ' + label.toLowerCase()} className="ml-[10px]">
      <svg viewBox="0 0 8 8" className="size-2" stroke="#444" strokeWidth="1.800">
        <path d="M.5.5l7 7M7.500.5l-7 7" />
      </svg>
    </button>
  </div>
);

const EditFeature = () => (
  <form className="mr-px mt-3 bg-[#f1f1f1] border border-[#cfcfcf] border-b-2 text-[#444]" onSubmit={(e) => e.preventDefault()}>
    <div className="flex items-center h-[21px] pl-[9px] pr-[3px] border-b-2 border-[#cfcfcf] text-[#666]">
      <svg viewBox="0 0 9 9" className="size-[9px] mr-[3px]">
        <circle cx="4.500" cy="4.500" r="4.500" fill="#333" />
        <path d="M2 4.500h5" stroke="#f1f1f1" strokeWidth="1.400" />
      </svg>
      <h2 className="flex-1">EDIT FEATURE</h2>
      <svg viewBox="0 0 10 6" className="w-[9px] h-[6px]" fill="#333">
        <path d="M0 0v6l5-3zM5 0v6l5-3z" />
      </svg>
    </div>
    <div className="pl-[10px] pt-[1px] pb-[1px]">
      <SelectionField id="body" label="Body to Split" active />
      <SelectionField id="tool" label="Splitting Tool(s)" />
      <div className="flex items-center h-[26px]">
        <label htmlFor="extend" className="w-[116px]">Extend Splitting Tool(s)</label>
        <input
          id="extend"
          type="checkbox"
          className="appearance-none size-3 rounded-[3px] border border-[#555] bg-linear-to-b from-[#cfcfcf] to-[#fafafa] checked:from-[#0a94dc]"
        />
      </div>
    </div>
    <div className="flex items-center gap-[9px] h-[31px] pl-[7px] pr-[9px] border-t-2 border-[#cfcfcf]">
      <svg viewBox="0 0 11 11" className="size-[11px] mr-auto">
        <circle cx="5.500" cy="5.500" r="5.500" fill="#111" />
        <path d="M5.500 2v1.700M5.500 4.700V9" stroke="#fff" strokeWidth="1.800" />
      </svg>
      <button className="w-[53px] h-[18px] border border-[#bdbdbd] bg-[#ebebeb] text-[#666]">OK</button>
      <button className="w-[53px] h-[18px] border border-[#bdbdbd] bg-[#ebebeb] text-[#666]">Cancel</button>
    </div>
  </form>
);

const RightColumn = () => (
  <section className="flex flex-col w-[220px] shrink-0 pt-[10px]">
    <ViewCube />
    <EditFeature />
    <div className="flex items-center justify-end gap-[13px] mt-auto mb-[5px] pr-[7px] font-bold text-[#333]">
      2 Bodies
      <svg viewBox="0 0 15 15" className="size-[15px]">
        <circle cx="7.500" cy="7.500" r="7.500" fill="#111" />
        <path d="M3 10q0-3 3-3 0-3 5-2.500L10 7h2l-3 2 1 1z" fill="#f1f1f1" />
      </svg>
    </div>
  </section>
);

/* ---------- timeline ---------- */

const PLAYBACK = [
  ['To start', 'M1 1h2v10H1zM11 1v10L3 6z'],
  ['Step back', 'M8 1v10L0 6zM9 4h2v4H9z'],
  ['Play', 'M1 0l11 6L1 12z'],
  ['Step forward', 'M4 1v10l8-5zM1 4h2v4H1z'],
  ['To end', 'M9 1h2v10H9zM1 1v10l8-5z'],
];

const Copies = () => (
  <Ico size="size-4">
    <g fill="#ececec" stroke="#777" strokeWidth="5">
      <rect x="6" y="6" width="30" height="38" rx="8" />
      <rect x="50" y="42" width="30" height="38" rx="8" />
    </g>
    <path d="M6 20h30M50 56h30" stroke="#777" strokeWidth="4" />
    <path d="M22 55v16h20" stroke="#4595d0" strokeWidth="5" strokeDasharray="8 4" />
  </Ico>
);

const Linked = () => (
  <Ico size="size-4">
    <Box x={4} y={4} w={64} h={64} d={16} c={['#dadada', '#eee', '#c6c6c6']} />
    <g stroke="#555" strokeWidth="5" fill="none">
      <rect x="12" y="42" width="34" height="22" rx="11" transform="rotate(-45 29 53)" />
      <rect x="34" y="34" width="34" height="22" rx="11" transform="rotate(-45 51 45)" />
    </g>
  </Ico>
);

const FEATURES = [
  Copies,
  () => <Move size="size-4" />,
  Linked,
  () => <Split size="size-4" />,
  () => <Sketch size="size-4" pencil />,
  () => <Extrude size="size-4" />,
  () => <Shell size="size-4" />,
  () => <Sketch size="size-4" pencil />,
  () => <Extrude size="size-4" />,
  () => <Split size="size-4" />,
];

const Timeline = () => (
  <footer className="flex items-start h-[42px] border-t border-[#dcdcdc] bg-[#f1f1f1]">
    <div className="flex gap-[10px] pl-2 pt-[15px]">
      {PLAYBACK.map(([name, d]) => (
        <button key={name} aria-label={name}>
          <svg viewBox="0 0 12 12" className="size-3" fill="#5a5a5a">
            <path d={d} />
          </svg>
        </button>
      ))}
    </div>
    <div className="flex pt-[13px] pl-[15px]">
      <div className="flex flex-col items-center w-[22px]">
        <svg viewBox="0 0 15 16" className="w-[15px] h-4" fill="#fff" stroke="#777">
          <path d="M.5 6h3v5h-3zM5.500 6h3v5h-3zM10.500 6h3v5h-3z" />
        </svg>
        <svg viewBox="0 0 9 9" className="size-[9px] mt-[1px]">
          <path d="M0 0h9v9H0z" fill="#777" />
          <path d="M4.500 1.500v6M1.500 4.500h6" stroke="#fff" strokeWidth="1.500" />
        </svg>
      </div>
      {FEATURES.map((Feature, i) => (
        <div key={i} className="flex flex-col items-center w-[21px]">
          <button aria-label={'Feature ' + (i + 1)}>
            <Feature />
          </button>
          <svg viewBox="0 0 21 6" className="w-[21px] h-[6px]" stroke="#c3c3c3" strokeWidth="1.500">
            <path d={i === FEATURES.length - 1 ? 'M0 5h11M11 0v5' : 'M0 5h21M11 0v5'} />
          </svg>
        </div>
      ))}
    </div>
    <svg viewBox="0 0 12 29" className="w-3 h-[29px] mt-2 -ml-1" fill="#555">
      <path d="M0 0h12v4L7 9v20H5V9L0 4z" />
    </svg>
    <button aria-label="Timeline settings" className="ml-auto mr-2 mt-[14px]">
      <TreeIcon kind="gear" />
    </button>
  </footer>
);

export default function App() {
  return (
    <div className="flex flex-col h-screen min-h-[640px] overflow-hidden bg-white font-['Liberation_Sans',Arial,sans-serif] text-[10px] leading-[14px] text-[#444]">
      <TopBar />
      <Ribbon />
      <main className="flex flex-1 min-h-0">
        <Sidebar />
        <div className="flex flex-col flex-1 min-w-0">
          <Model />
          <ViewTools />
        </div>
        <RightColumn />
      </main>
      <Timeline />
    </div>
  );
}
